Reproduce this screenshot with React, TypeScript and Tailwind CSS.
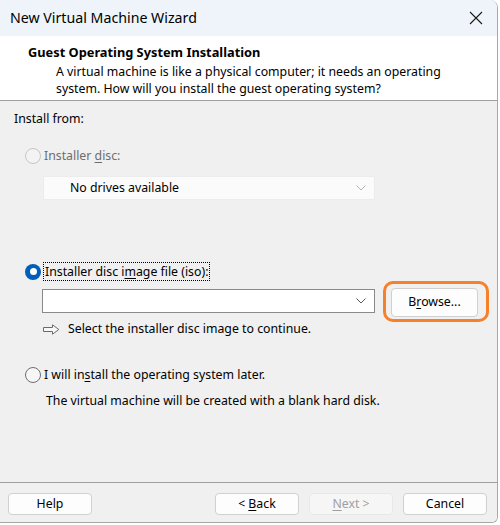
import React from 'react';

function Chevron({ color }: { color: string }) {
  return (
    <svg width="10" height="6" viewBox="0 0 10 6" fill="none">
      <path d="M0.5 0.5 L5 5 L9.5 0.5" stroke={color} strokeWidth="1" />
    </svg>
  );
}

function Radio({ state }: { state: 'disabled' | 'checked' | 'off' }) {
  if (state === 'checked') {
    return (
      <span className="flex h-[16px] w-[16px] shrink-0 items-center justify-center rounded-full bg-[#005fb8]">
        <span className="h-[7px] w-[7px] rounded-full bg-white" />
      </span>
    );
  }
  return (
    <span
      className={
        state === 'disabled'
          ? 'h-[16px] w-[16px] shrink-0 rounded-full border border-[#c6c6c6] bg-[#f3f3f3]'
          : 'h-[16px] w-[16px] shrink-0 rounded-full border border-[#6e6e6e] bg-[#f6f6f6]'
      }
    />
  );
}

function Button({ children, disabled }: { children: React.ReactNode; disabled?: boolean }) {
  return (
    <div
      className={
        disabled
          ? 'flex h-[22px] w-[84px] items-center justify-center rounded-[4px] border border-[#e8e8e8] bg-[#f6f6f6] text-[#a0a0a0]'
          : 'flex h-[22px] w-[84px] items-center justify-center rounded-[4px] border border-[#d0d0d0] bg-[#fdfdfd] text-black'
      }
    >
      {children}
    </div>
  );
}

export default function App() {
  return (
    <div className="h-[525px] w-[500px] overflow-hidden bg-white font-['Segoe_UI','Noto_Sans',sans-serif] text-[12.3px] text-black">
      <div className="flex h-[523px] w-[498px] flex-col overflow-hidden rounded-tr-[8px] rounded-br-[6px] border-r border-b border-[#a8a8a8]">
        {/* title bar */}
        <div className="flex h-[36px] shrink-0 items-center justify-between bg-[#eef4f9] pl-[10px] pr-[14px]">
          <span className="text-[14.2px] leading-[20px]">New Virtual Machine Wizard</span>
          <svg width="14" height="14" viewBox="0 0 14 14" fill="none">
            <path d="M1 1 L13 13 M13 1 L1 13" stroke="#1a1a1a" strokeWidth="1.1" />
          </svg>
        </div>

        {/* header */}
        <div className="h-[65px] shrink-0 border-b border-[#a0a0a0] bg-white pt-[8px]">
          <div className="pl-[28px] text-[12.8px] font-bold leading-[16px]">Guest Operating System Installation</div>
          <div className="mt-[3px] pl-[56px] leading-[17px]">
            A virtual machine is like a physical computer; it needs an operating
            <br />
            system. How will you install the guest operating system?
          </div>
        </div>

        {/* body */}
        <div className="flex-1 bg-[#f0f0f0] px-[14px] pt-[9px]">
          <div className="leading-[18px]">Install from:</div>

          <div className="mt-[19px] flex h-[18px] items-center gap-[3px] pl-[11px] text-[#6d6d6d]">
            <Radio state="disabled" />
            <span>
              Installer <u className="underline-offset-2">d</u>isc:
            </span>
          </div>

          <div className="mt-[11px] ml-[29px] flex h-[24px] w-[332px] items-center justify-between border border-[#ececec] bg-[#fbfbfb] pl-[26px] pr-[8px]">
            <span>No drives available</span>
            <Chevron color="#b5b5b5" />
          </div>

          <div className="mt-[62px] flex h-[19px] items-center gap-[2px] pl-[11px]">
            <Radio state="checked" />
            <span className="border border-dotted border-black px-[1px] leading-[17px]">
              Installer disc i<u className="underline-offset-2">m</u>age file (iso):
            </span>
          </div>

          <div className="mt-[7px] flex items-start pl-[28px]">
            <div className="mt-[1px] flex h-[24px] w-[333px] items-center justify-end border border-[#8a8a8a] bg-white pr-[8px]">
              <Chevron color="#5a5a5a" />
            </div>
            <div className="relative ml-[16px]">
              <div className="flex h-[29px] w-[87px] items-center justify-center rounded-[4px] border border-[#d0d0d0] bg-[#fdfdfd]">
                <span>
                  B<u className="underline-offset-2">r</u>owse...
                </span>
              </div>
              <div className="absolute -top-[7px] -right-[11px] -bottom-[5px] -left-[8px] rounded-[10px] border-[3.5px] border-[#f7802a]" />
            </div>
          </div>

          <div className="mt-[4px] flex h-[16px] items-center pl-[29px]">
            <svg width="17" height="11" viewBox="0 0 17 11" fill="none">
              <path d="M0.5 3.5 H9.5 V0.8 L15.8 5.5 L9.5 10.2 V7.5 H0.5 Z" fill="#f7f7f7" stroke="#6a6a6a" strokeWidth="1" />
            </svg>
            <span className="ml-[8px]">Select the installer disc image to continue.</span>
          </div>

          <div className="mt-[29px] flex h-[18px] items-center gap-[3px] pl-[11px]">
            <Radio state="off" />
            <span>
              I will in<u className="underline-offset-2">s</u>tall the operating system later.
            </span>
          </div>

          <div className="mt-[9px] pl-[32px] leading-[16px]">The virtual machine will be created with a blank hard disk.</div>
        </div>

        {/* footer */}
        <div className="flex h-[40px] shrink-0 items-start border-t border-[#a0a0a0] bg-[#f0f0f0] pt-[10px] pl-[8px] pr-[10px]">
          <Button>Help</Button>
          <div className="flex-1" />
          <div className="flex gap-[10px]">
            <Button>
              &lt; <u className="ml-[3px] underline-offset-2">B</u>ack
            </Button>
            <Button disabled>
              <u className="underline-offset-2">N</u>ext &gt;
            </Button>
            <Button>Cancel</Button>
          </div>
        </div>
      </div>
    </div>
  );
}
